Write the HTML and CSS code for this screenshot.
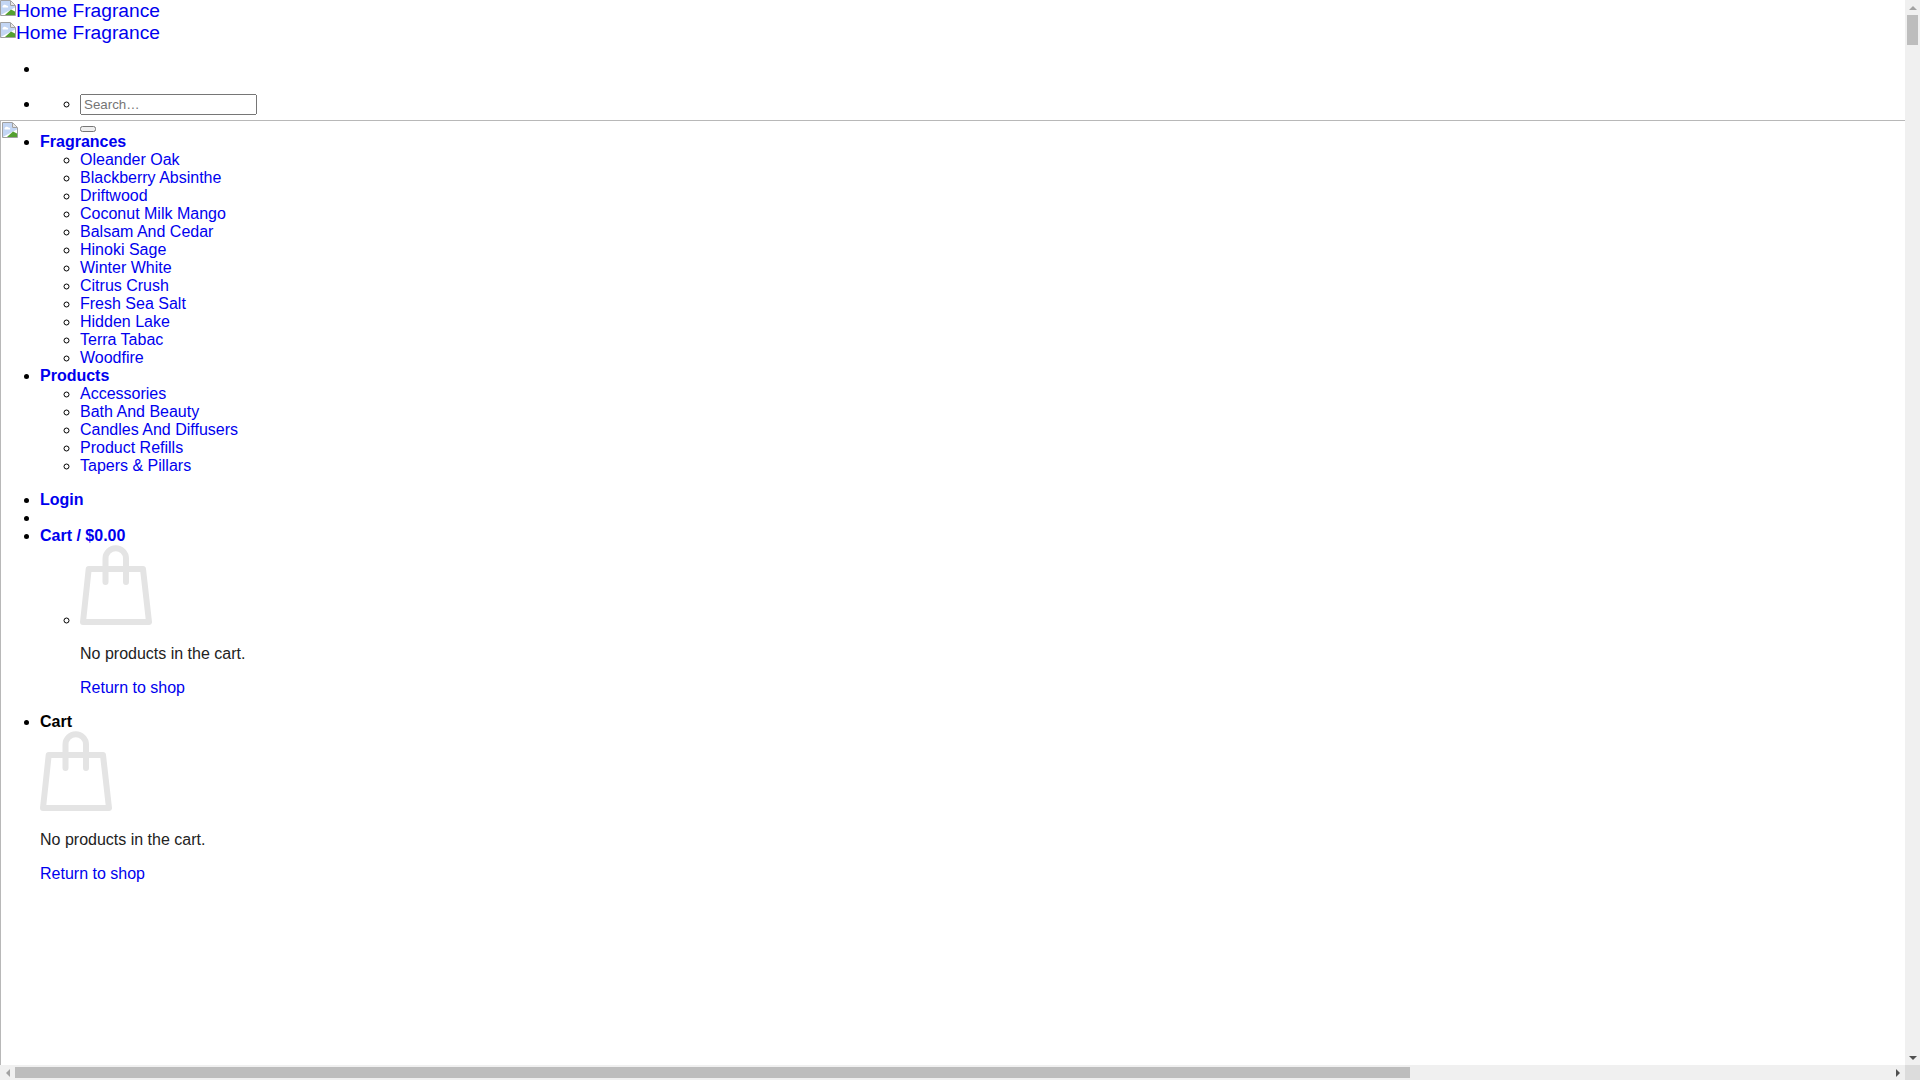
FILE: index.html
```html
<!DOCTYPE html>
<html lang="en">
<head>
    <meta charset="UTF-8">
    <meta name="viewport" content="width=device-width, initial-scale=1.0">
    <title>Home Fragrance</title>
    <link rel="stylesheet" href="styles.css">
</head>
<body>
    <svg class="svg-defs" width="0" height="0">
        <defs>
            <symbol id="broken" viewBox="0 0 16 16">
                <path d="M0.5 15.5V0.5H10.5L15.5 5.5V15.5Z" fill="#fff" stroke="#a0a0a0"/>
                <path d="M1 1H10V6H15V7.5L3.5 13.5L1 15Z" fill="#c3d6f4"/>
                <path d="M2.5 6.5C3 4.5 5.5 4 6.5 5.5C8 5.5 8.5 6.5 8 7.5H3.5C2.8 7.5 2.3 7.2 2.5 6.5Z" fill="#fff"/>
                <path d="M10.5 1V5.5H15" fill="#e6e6e6" stroke="#a0a0a0"/>
                <path d="M5 15L11 9.5L15 11.5V15Z" fill="#54a030"/>
            </symbol>
            <symbol id="bag" viewBox="0 0 72 80">
                <path d="M8.7 24H63L69 77H3Z" fill="none" stroke="#e4e4e4" stroke-width="6" stroke-linejoin="round"/>
                <path d="M25.5 37V13.5a10.25 10.25 0 0 1 20.5 0V37" fill="none" stroke="#e4e4e4" stroke-width="6" stroke-linecap="round"/>
            </symbol>
        </defs>
    </svg>

    <header class="site-header">
        <div class="logo"><a href="#"><svg class="broken-img logo-img"><use href="#broken"/></svg>Home Fragrance</a></div>
        <div class="logo"><a href="#"><svg class="broken-img logo-img"><use href="#broken"/></svg>Home Fragrance</a></div>
        <ul class="header-nav">
            <li class="header-spacer"></li>
            <li>
                <ul>
                    <li>
                        <form class="search-form">
                            <input class="search-input" type="text" placeholder="Search…">
                            <button class="search-btn" type="button"></button>
                        </form>
                    </li>
                </ul>
            </li>
        </ul>
    </header>

    <div class="drawer">
        <svg class="broken-img drawer-img"><use href="#broken"/></svg>
        <ul class="main-nav">
            <li>
                <a class="nav-title" href="#">Fragrances</a>
                <ul>
                    <li><a href="#">Oleander Oak</a></li>
                    <li><a href="#">Blackberry Absinthe</a></li>
                    <li><a href="#">Driftwood</a></li>
                    <li><a href="#">Coconut Milk Mango</a></li>
                    <li><a href="#">Balsam And Cedar</a></li>
                    <li><a href="#">Hinoki Sage</a></li>
                    <li><a href="#">Winter White</a></li>
                    <li><a href="#">Citrus Crush</a></li>
                    <li><a href="#">Fresh Sea Salt</a></li>
                    <li><a href="#">Hidden Lake</a></li>
                    <li><a href="#">Terra Tabac</a></li>
                    <li><a href="#">Woodfire</a></li>
                </ul>
            </li>
            <li>
                <a class="nav-title" href="#">Products</a>
                <ul>
                    <li><a href="#">Accessories</a></li>
                    <li><a href="#">Bath And Beauty</a></li>
                    <li><a href="#">Candles And Diffusers</a></li>
                    <li><a href="#">Product Refills</a></li>
                    <li><a href="#">Tapers &amp; Pillars</a></li>
                </ul>
            </li>
        </ul>
        <ul class="account-nav">
            <li><a class="nav-title" href="#">Login</a></li>
            <li></li>
            <li>
                <a class="nav-title" href="#">Cart / $0.00</a>
                <ul>
                    <li>
                        <svg class="bag"><use href="#bag"/></svg>
                        <p>No products in the cart.</p>
                        <p><a href="#">Return to shop</a></p>
                    </li>
                </ul>
            </li>
            <li>
                <b>Cart</b>
                <div>
                    <svg class="bag"><use href="#bag"/></svg>
                    <p>No products in the cart.</p>
                    <p><a href="#">Return to shop</a></p>
                </div>
            </li>
        </ul>
    </div>

    <!-- window scrollbars -->
    <div class="scrollbar scrollbar-v">
        <span class="arrow-box"><i class="arrow arrow-up"></i></span>
        <span class="thumb"></span>
        <span class="arrow-box arrow-end"><i class="arrow arrow-down"></i></span>
    </div>
    <div class="scrollbar scrollbar-h">
        <span class="arrow-box"><i class="arrow arrow-left"></i></span>
        <span class="thumb"></span>
        <span class="arrow-box arrow-end"><i class="arrow arrow-right"></i></span>
    </div>
    <div class="scroll-corner"></div>
</body>
</html>
```

FILE: styles.css
```css
html, body {
    height: 100%;
    overflow: hidden;
}
body {
    margin: 0;
    font-family: "Liberation Sans", Arial, sans-serif;
    font-size: 16px;
    color: #000;
    background: #fff;
}
a {
    color: #00e;
    text-decoration: none;
}
p {
    margin: 16px 0;
    color: #222;
}
.svg-defs {
    display: block;
    height: 0;
}
.broken-img {
    width: 16px;
    height: 16px;
}
.logo-img {
    vertical-align: 1px;
}
.site-header {
    height: 120px;
}
.logo {
    font-size: 19.2px;
    line-height: 22px;
}
.header-nav {
    margin: 16px 0 0;
}
.header-spacer {
    margin-bottom: 16px;
}
.search-input {
    display: block;
    box-sizing: border-box;
    width: 177px;
}
.search-btn {
    display: block;
    margin-top: 11px;
}
.drawer {
    width: 1905px;
    height: 960px;
    box-sizing: border-box;
    border-top: 1px solid #b8b8b8;
    border-left: 1px solid #b8b8b8;
}
.drawer-img {
    float: left;
    margin: 1px 0 0 1px;
}
.main-nav {
    margin: 12px 0 16px;
    padding-left: 39px;
}
.account-nav {
    margin: 0;
    padding-left: 39px;
}
.nav-title {
    font-weight: bold;
}
.bag {
    width: 72px;
    height: 80px;
}
.scrollbar {
    position: fixed;
    display: flex;
    background: #f0f0f0;
}
.scrollbar-v {
    top: 0;
    right: 0;
    width: 15px;
    height: 1065px;
    flex-direction: column;
}
.scrollbar-h {
    left: 0;
    bottom: 0;
    width: 1905px;
    height: 15px;
}
.arrow-box {
    display: flex;
    flex: none;
    align-items: center;
    justify-content: center;
    width: 15px;
    height: 15px;
}
.arrow-end {
    margin: auto 0 0 auto;
}
.thumb {
    background: #bdbdbd;
}
.scrollbar-v .thumb {
    width: 11px;
    height: 30px;
    margin: 0 2px;
}
.scrollbar-h .thumb {
    width: 1395px;
    height: 11px;
    margin: 2px 0;
}
.arrow {
    width: 0;
    height: 0;
    border-style: solid;
    border-color: transparent;
}
.arrow-up {
    border-width: 0 4px 4px;
    border-bottom-color: #a3a3a3;
}
.arrow-down {
    border-width: 4px 4px 0;
    border-top-color: #505050;
}
.arrow-left {
    border-width: 4px 4px 4px 0;
    border-right-color: #a3a3a3;
}
.arrow-right {
    border-width: 4px 0 4px 4px;
    border-left-color: #505050;
}
.scroll-corner {
    position: fixed;
    right: 0;
    bottom: 0;
    width: 15px;
    height: 15px;
    background: #dcdcdc;
}
```
